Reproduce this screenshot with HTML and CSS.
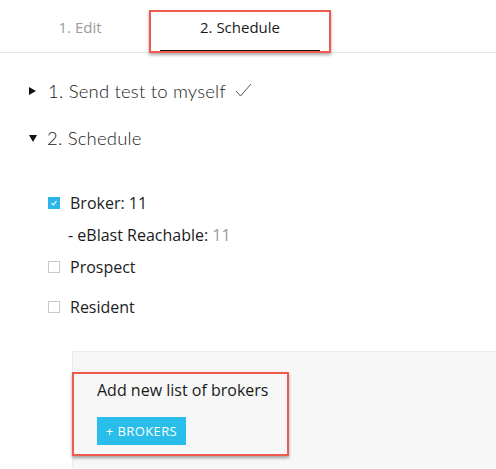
FILE: index.html
```html
<!DOCTYPE html>
<html>
<head>
<meta charset="utf-8">
<link rel="stylesheet" href="styles.css">
</head>
<body>
<div class="tabs">
  <div class="tab">1. Edit</div>
  <div class="tab active">2. Schedule</div>
</div>
<div class="steps">
  <div class="step">
    <span class="caret right"></span>
    <span class="step-title">1. Send test to myself</span>
    <svg class="check" width="17" height="14" viewBox="0 0 17 14"><polyline points="1,8 5.5,13 16,1" fill="none" stroke="#555" stroke-width="1"/></svg>
  </div>
  <div class="step step2">
    <span class="caret down"></span>
    <span class="step-title">2. Schedule</span>
  </div>
</div>
<div class="lists">
  <div class="opt">
    <span class="box checked"><svg width="12" height="12" viewBox="0 0 12 12"><polyline points="3,6.2 5.1,8.2 9,3.8" fill="none" stroke="#fff" stroke-width="1.4"/></svg></span>
    <span>Broker: 11</span>
  </div>
  <div class="sub">- eBlast Reachable: <span class="muted">11</span></div>
  <div class="opt">
    <span class="box"></span>
    <span>Prospect</span>
  </div>
  <div class="opt resident">
    <span class="box"></span>
    <span>Resident</span>
  </div>
</div>
<div class="panel">
  <div class="add-box">
    <div class="add-title">Add new list of brokers</div>
    <button class="btn">+ BROKERS</button>
  </div>
</div>
</body>
</html>
```
FILE: styles.css
```css
html, body {
  margin: 0;
  padding: 0;
  background: #fff;
  font-family: "Open Sans", "Liberation Sans", sans-serif;
  color: #333;
  overflow: hidden;
  height: 469px;
}
.tabs {
  display: flex;
  height: 52px;
  border-bottom: 1px solid #e6e6e6;
}
.tab {
  width: 160px;
  text-align: center;
  font-size: 15px;
  line-height: 20px;
  padding-top: 17px;
  color: #9a9a9a;
  box-sizing: border-box;
}
.tab.active {
  position: relative;
  color: #1a1a1a;
  border-bottom: 2px solid #111;
}
.tab.active::after {
  content: "";
  position: absolute;
  left: -11px;
  right: -11px;
  top: 10px;
  bottom: -3px;
  border: 2px solid #ef5a4f;
  box-shadow: 0 2px 3px rgba(0,0,0,0.35);
}
.steps {
  padding-left: 29px;
  padding-top: 26px;
}
.step {
  display: flex;
  align-items: center;
  height: 24px;
  font-family: "Lato", "Liberation Sans", sans-serif;
  font-weight: 300;
  font-size: 18.5px;
  color: #1a1a1a;
}
.step2 {
  margin-top: 23px;
}
.caret {
  width: 0;
  height: 0;
  margin-right: 12px;
}
.caret.right {
  border-top: 4.5px solid transparent;
  border-bottom: 4.5px solid transparent;
  border-left: 7px solid #111;
}
.caret.down {
  border-left: 4.5px solid transparent;
  border-right: 4.5px solid transparent;
  border-top: 7px solid #111;
  margin-right: 10px;
}
.step-title {
  letter-spacing: 0.2px;
}
.check {
  margin-left: 9px;
  margin-top: -2px;
}
.lists {
  padding-left: 48px;
  padding-top: 42px;
  font-size: 16px;
  color: #222;
}
.opt {
  display: flex;
  align-items: center;
  height: 22px;
}
.opt + .sub {
  margin-top: 10px;
}
.sub {
  height: 22px;
  line-height: 22px;
  padding-left: 20px;
  color: #1a1a1a;
}
.sub + .opt {
  margin-top: 10px;
}
.resident {
  margin-top: 18px;
}
.muted {
  color: #9a9a9a;
}
.box {
  width: 10px;
  height: 10px;
  border: 1px solid #c9c9c9;
  margin-right: 10px;
  display: inline-flex;
  align-items: center;
  justify-content: center;
}
.box.checked {
  background: #2ab6e9;
  border-color: #2ab6e9;
}
.panel {
  margin-left: 72px;
  margin-top: 33px;
  background: #f7f7f7;
  border-top: 1px solid #ececec;
  border-left: 1px solid #ececec;
  height: 96px;
  padding-top: 20px;
}
.add-box {
  width: 190px;
  height: 80px;
  border: 2px solid #ef5a4f;
  box-shadow: 0 2px 3px rgba(0,0,0,0.35);
  margin-left: -1px;
  padding-left: 23px;
}
.add-title {
  font-size: 16px;
  line-height: 20px;
  color: #1a1a1a;
  margin-top: 6px;
}
.btn {
  display: block;
  margin-top: 17px;
  border: none;
  background: #29bdea;
  color: #fff;
  font-family: "Open Sans", "Liberation Sans", sans-serif;
  font-size: 13px;
  height: 28px;
  width: 89px;
  padding: 0;
  letter-spacing: 0.4px;
}
```
